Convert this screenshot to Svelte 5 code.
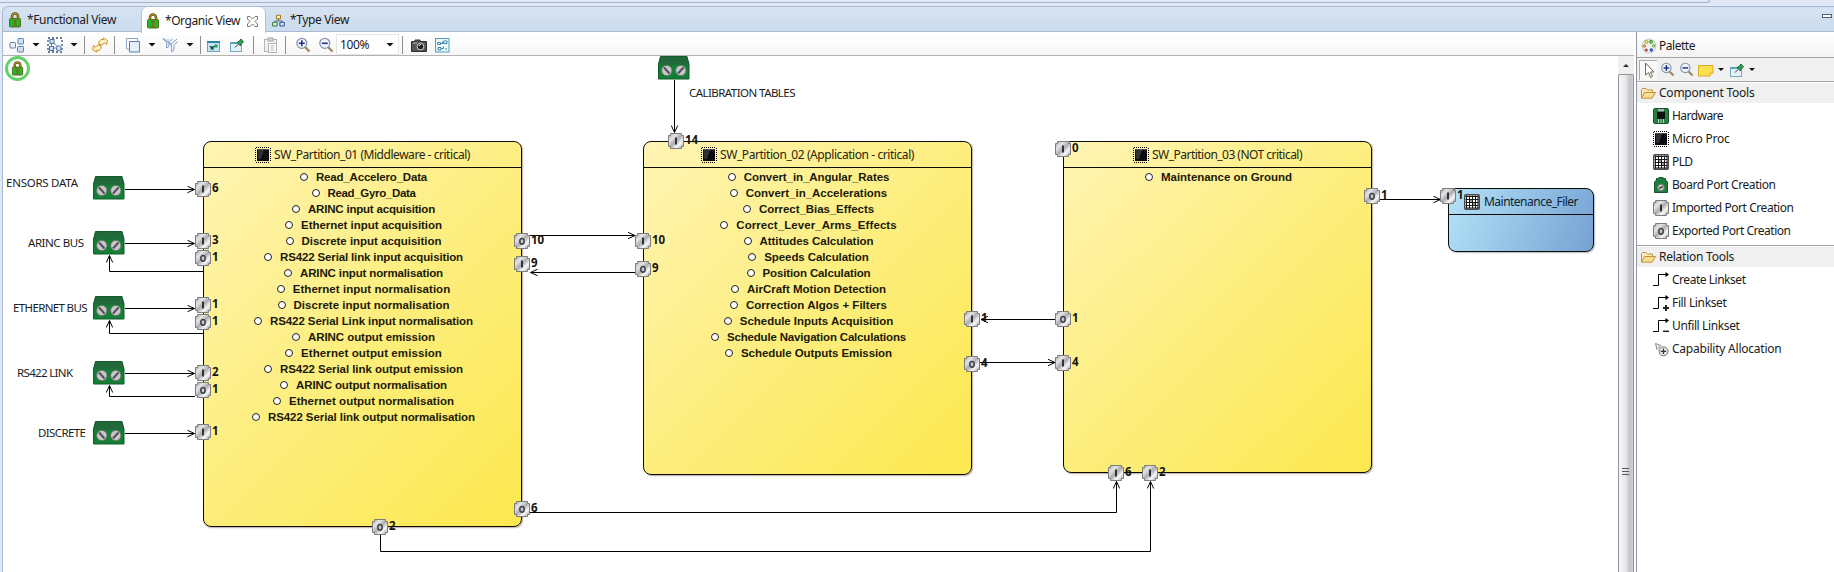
<script>
  // Spreads a label's letters so that it takes exactly the given width.
  function fit(node, width) {
    if (!width) return;
    const natural = node.getBoundingClientRect().width;
    node.style.letterSpacing = (width - natural) / node.textContent.length + 'px';
  }

  const toolbar = [
    { icon: 'boxes', gap: 6 }, { arrow: true, gap: 7 },
    { icon: 'select', gap: 7 }, { arrow: true, gap: 7 },
    { sep: true, gap: 6 }, { icon: 'sync', gap: 7 }, { sep: true, gap: 6 },
    { icon: 'layers', gap: 10 }, { arrow: true, gap: 7 },
    { icon: 'filter', gap: 6 }, { arrow: true, gap: 8 },
    { sep: true, gap: 6 }, { icon: 'pinwin', gap: 7 }, { icon: 'pin', gap: 8 },
    { sep: true, gap: 5 }, { icon: 'clip', gap: 9 }, { sep: true, gap: 6 },
    { icon: 'zoomin', gap: 9 }, { icon: 'zoomout', gap: 7 },
    { combo: true, gap: 2 }, { sep: true, gap: 3 },
    { icon: 'camera', gap: 8 }, { icon: 'outline', gap: 7 }
  ];

  const sections = [
    { title: 'Component Tools', w: 95.5, items: [
      ['hardware', 'Hardware', 51], ['chip', 'Micro Proc', 57.5], ['pld', 'PLD', 20.5],
      ['board', 'Board Port Creation', 103.5], ['portI', 'Imported Port Creation', 121.5],
      ['portO', 'Exported Port Creation', 118.5]
    ] },
    { title: 'Relation Tools', w: 75, items: [
      ['link', 'Create Linkset', 73.5], ['linkplus', 'Fill Linkset', 54.5],
      ['linkminus', 'Unfill Linkset', 67.5], ['capability', 'Capability Allocation', 109.5]
    ] }
  ];

  const nodes = [
    { x: 203, y: 141, w: 319, h: 386, title: 'SW_Partition_01 (Middleware - critical)', tw: 196, rows: [
      ['Read_Accelero_Data', 111], ['Read_Gyro_Data', 88], ['ARINC input acquisition', 127],
      ['Ethernet input acquisition', 141], ['Discrete input acquisition', 140],
      ['RS422 Serial link input acquisition', 183], ['ARINC input normalisation', 143],
      ['Ethernet input normalisation', 157.5], ['Discrete input normalisation', 156],
      ['RS422 Serial Link input normalisation', 203], ['ARINC output emission', 127],
      ['Ethernet output emission', 141], ['RS422 Serial link output emission', 183],
      ['ARINC output normalisation', 151], ['Ethernet output normalisation', 165],
      ['RS422 Serial link output normalisation', 207]
    ] },
    { x: 643, y: 141, w: 329, h: 334, title: 'SW_Partition_02 (Application - critical)', tw: 194, rows: [
      ['Convert_in_Angular_Rates', 145.5], ['Convert_in_Accelerations', 141.5], ['Correct_Bias_Effects', 115],
      ['Correct_Lever_Arms_Effects', 160.5], ['Attitudes Calculation', 114], ['Speeds Calculation', 104.5],
      ['Position Calculation', 108], ['AirCraft Motion Detection', 139],
      ['Correction Algos + Filters', 141], ['Schedule Inputs Acquisition', 153.5],
      ['Schedule Navigation Calculations', 179], ['Schedule Outputs Emission', 151]
    ] },
    { x: 1063, y: 141, w: 309, h: 332, title: 'SW_Partition_03 (NOT critical)', tw: 150, rows: [
      ['Maintenance on Ground', 131]
    ] },
    { x: 1448, y: 188, w: 146, h: 64, title: 'Maintenance_Filer', tw: 94, blue: true, rows: [] }
  ];

  // centre x, centre y, kind, number of grouped ports
  const ports = [
    [203, 189, 'I', 6], [203, 241, 'I', 3], [203, 258, 'O', 1], [203, 305, 'I', 1], [203, 322, 'O', 1],
    [203, 373, 'I', 2], [203, 390, 'O', 1], [203, 432, 'I', 1],
    [522, 241, 'O', 10], [522, 264, 'I', 9], [522, 509, 'O', 6], [380, 527, 'O', 2],
    [676, 141, 'I', 14], [643, 241, 'I', 10], [643, 269, 'O', 9], [972, 319, 'I', 1], [972, 364, 'O', 4],
    [1063, 149, 'I', 0], [1063, 319, 'O', 1], [1063, 363, 'I', 4], [1372, 196, 'O', 1],
    [1116, 473, 'I', 6], [1150, 473, 'I', 2], [1448, 196, 'I', 1]
  ];

  const boards = [[93, 176], [93, 231], [93, 296], [93, 361], [93, 421], [658, 56]];

  const labels = [
    ['ENSORS DATA', 6, 187, 72], ['ARINC BUS', 28, 247, 56], ['ETHERNET BUS', 13, 312, 74.5],
    ['RS422 LINK', 17, 377, 56], ['DISCRETE', 38, 437, 48], ['CALIBRATION TABLES', 689, 97, 106.5]
  ];

  const edges = [
    'M125 189.5H194.5', 'M125 243.5H194.5', 'M125 308.5H194.5', 'M125 373.5H194.5', 'M125 433.5H194.5',
    'M203 271.5H109.5V255.5', 'M203 333.5H109.5V320.5', 'M195 396.5H109.5V385.5',
    'M674.5 80V132.5', 'M530 235.5H635', 'M635 272.5H530.5',
    'M1055 319.5H981', 'M980 362.5H1055', 'M1380 199.5H1440.5',
    'M530 512.5H1116.5V481.5', 'M380.5 535V551.5H1150.5V481.5'
  ];
</script>

{#snippet icon(name, size = 16)}
  <svg class="icon" width={size} height={size} viewBox="0 0 16 16">
    {#if name === 'lock'}
      <path d="M5 7V4.500A3 3 0 0 1 11 4.500V7" fill="none" stroke="#5c4a08" stroke-width="2.600" />
      <path d="M5 7V4.500A3 3 0 0 1 11 4.500V7" fill="none" stroke="#c8a63a" stroke-width="1" />
      <rect x="2.500" y="6.500" width="11" height="8.500" rx="1" fill="#25b52b" stroke="#5c6b16" />
      <path d="M6 8.500h4M8 8.500v5M6 13.500h4M6.500 11h3" stroke="#a0521a" />
    {:else if name === 'tree'}
      <path d="M8 5v4M3.500 10V8.500h9V10" fill="none" stroke="#4d5f7d" />
      <rect x="5.500" y="1.500" width="5" height="4.500" rx="1" fill="#fdf3b0" stroke="#a87a1a" stroke-width="1.300" />
      <rect x=".8" y="10.200" width="5.500" height="4.500" rx="1" fill="#d9f0d0" stroke="#2f7a38" stroke-width="1.300" />
      <rect x="9.700" y="10.200" width="5.500" height="4.500" rx="1" fill="#d5e4fa" stroke="#2c4e98" stroke-width="1.300" />
    {:else if name === 'boxes'}
      <rect x="1" y="5.500" width="5.500" height="5.500" rx=".8" fill="#e9f1fa" stroke="#5f82ab" />
      <rect x="9" y="1.500" width="5.500" height="5.500" rx=".8" fill="#cfe0f3" stroke="#5f82ab" />
      <rect x="8.500" y="9.500" width="6" height="5.500" rx=".8" fill="#cfe0f3" stroke="#5f82ab" />
    {:else if name === 'select'}
      <rect x="1" y="1" width="14" height="14" fill="none" stroke="#39506e" stroke-dasharray="2 2" stroke-width="1.300" />
      <path d="M4.500 4v7M5 5l6 5M5 11h6" stroke="#6d8db0" fill="none" />
      <rect x="3" y="2.500" width="4" height="4" fill="#cfe0f3" stroke="#4d73a0" />
      <rect x="2.500" y="9.500" width="4" height="4" fill="#cfe0f3" stroke="#4d73a0" />
      <rect x="9.500" y="9" width="4.500" height="4.500" rx="1.500" fill="#cfe0f3" stroke="#4d73a0" />
    {:else if name === 'sync'}
      <path d="M7 7.500V4.500L9 2.500H11.500V.8L15.500 3.500L14.500 7.500L12.500 6L10 8z" fill="#fdf0c4" stroke="#d0901f" />
      <path d="M9 8.500V11.500L7 13.500H4.500V15.200L.5 12.500L1.500 8.500L3.500 10L6 8z" fill="#fdf0c4" stroke="#d0901f" />
    {:else if name === 'layers'}
      <path d="M1.500 1.500h11v10.500h-11z" fill="#fff" stroke="#8aa6c5" />
      <path d="M4.500 4.500h10v10.500h-10z" fill="#e6f0fa" stroke="#5c80aa" />
    {:else if name === 'filter'}
      <path d="M.5 1.500l4 3.500v6l2.500-1.500V5L10.500 2" fill="#dbe9f7" stroke="#83a6c9" />
      <path d="M6.500 4.500l3 3.500v7l2.500-2V8.500L15.500 4.500" fill="#eef5fc" stroke="#83a6c9" />
      <path d="M1 1.500l8 5.500M15 2L8 8" stroke="#7f9fc2" />
    {:else if name === 'pinwin'}
      <rect x="2.500" y="4.500" width="12" height="10" fill="#c9e4f4" stroke="#6fa2b9" />
      <path d="M2 5h13" stroke="#2d83a8" stroke-width="2" />
      <path d="M4 9l4.500 4.500V9.500z" fill="#14324e" /><path d="M5.500 12.500l5-4" stroke="#17733a" stroke-width="1.500" />
      <circle cx="11" cy="9" r="1.800" fill="#28a552" />
    {:else if name === 'pin'}
      <rect x="1.500" y="5.500" width="11" height="9" fill="#e2f1f8" stroke="#77aabf" />
      <path d="M2 6h7" stroke="#55a3c0" stroke-width="2" />
      <path d="M6 10.500l3-3" stroke="#333" />
      <path d="M8 5.500l3.500 3.500l1-2.500l2-1.500l-2.500-3l-1.500 2z" fill="#34a052" stroke="#1b6a34" />
    {:else if name === 'clip'}
      <rect x="1.500" y="2.500" width="12" height="12" fill="#f1f1f1" stroke="#b4b4b4" />
      <rect x="5" y="1" width="5" height="3" fill="#d8d8d8" stroke="#a8a8a8" />
      <path d="M5.500 6.500h8v9h-8z" fill="#fff" stroke="#b0b0b0" /><path d="M7.500 9h4M7.500 11h3M7.500 13h4" stroke="#b4b4b4" />
    {:else if name === 'zoomin' || name === 'zoomout'}
      <path d="M10 10l4.500 4.500" stroke="#9a8459" stroke-width="2.200" />
      <circle cx="6.800" cy="6.300" r="5" fill="#f0f4fb" stroke="#8593ad" stroke-width="1.200" />
      <path d={name === 'zoomin' ? 'M3.800 6.300h6M6.800 3.300v6' : 'M3.800 6.300h6'} stroke="#20338c" stroke-width="1.600" />
    {:else if name === 'camera'}
      <path d="M.5 4.500H4V3h5v1.500h6.500v10H.5z" fill="#565656" stroke="#2d2d2d" />
      <path d="M2 6h4" stroke="#b5b5b5" /><circle cx="9.500" cy="9.500" r="3.400" fill="#222" stroke="#d5d5d5" />
      <path d="M8 9a2 2 0 0 1 2-1.500" stroke="#eee" fill="none" />
    {:else if name === 'outline'}
      <rect x="1.500" y="1.500" width="13.500" height="13.500" fill="#eef9fc" stroke="#4f9dba" />
      <path d="M3.500 5.500h3v2h-3zM9.500 4h3.500v2.500H9.500zM4 10.500h3V13H4zM6.500 6.500h2v-1.500h1M7 11.500h2.500V9.500M11 12h2" fill="none" stroke="#3888aa" />
    {:else if name === 'palette'}
      <circle cx="8" cy="8" r="7" fill="#eef1f4" stroke="#b9cbe0" />
      <circle cx="5.500" cy="4" r="1.500" fill="#fff5a0" stroke="#b59a10" /><circle cx="10" cy="3.800" r="1.500" fill="#8fcf60" stroke="#3c9626" />
      <circle cx="3.300" cy="8" r="1.300" fill="#f6b36a" stroke="#d07428" /><circle cx="12.700" cy="7.800" r="1.300" fill="#c6e29a" stroke="#6aa52d" />
      <circle cx="5.200" cy="12" r="1.600" fill="#d53e36" /><circle cx="10.300" cy="12" r="1.700" fill="#2d4cc8" />
    {:else if name === 'cursor'}
      <path d="M4.500 1v12l3-2.500l2 5l2-1l-2-4.500h3.500z" fill="#fff" stroke="#6c674d" />
    {:else if name === 'note'}
      <path d="M.5 3.500h14.500V11l-3 3H.5z" fill="#fbe04f" stroke="#d9ad22" /><path d="M12 14V11h3" fill="#fff2a8" stroke="#d9ad22" />
    {:else if name === 'folder'}
      <path d="M1.500 13V4.500l1-1h3.500l1.500 1.500h5V7" fill="#fbeabb" stroke="#c0913d" />
      <path d="M1.500 13.200L4.500 7.500h11L12 13.200z" fill="#fbdc93" stroke="#c0913d" />
    {:else if name === 'hardware'}
      <rect x=".5" y=".5" width="15" height="15" rx="1.500" fill="#24813f" stroke="#14542a" />
      <rect x="4" y="3.500" width="8" height="7.500" fill="#0d0f0e" />
      <path d="M5 1h6v2.500H5z" fill="#a9b3ad" /><path d="M5.500 11v4M8 11v4M10.500 11v4" stroke="#c1cbc4" />
    {:else if name === 'chip'}
      <path d="M1 .5h14M1 15.500h14M.5 1v14M15.500 1v14" stroke="#000" stroke-dasharray="1 1" shape-rendering="crispEdges" />
      <rect x="2" y="2" width="12" height="12" fill="#0c0c0f" /><path d="M3 3h6L6 12H3z" fill="#303037" />
      <path d="M2 2.500h12" stroke="#4c4c52" />
    {:else if name === 'pld'}
      <rect x=".7" y=".7" width="14.600" height="14.600" rx="1.200" fill="#fff" stroke="#4a4a4a" stroke-width="1.400" />
      <path d="M2.500 1.500v13M5.500 1.500v13M8.500 1.500v13M11.500 1.500v13M14 1.500v13M1.500 2.500h13M1.500 5.500h13M1.500 8.500h13M1.500 11.500h13M1.500 14h13" stroke="#191919" />
      <path d="M6 6h2v2H6zM9 9h2v2H9z" fill="#999" />
    {:else if name === 'board'}
      <path d="M1.500 15.500V5l2-2V1.500h2L6 .5h4l.5 1h2V3l2 2v10.500z" fill="#1f7d3c" stroke="#145629" />
      <circle cx="8" cy="10.500" r="3.300" fill="#c8ccc8" stroke="#707a73" /><path d="M6 11.500l4-2" stroke="#4c5652" stroke-width="1.500" />
    {:else if name === 'portI' || name === 'portO'}
      <path d="M2.500.5h11v2h2v11h-2v2h-11v-2h-2v-11h2z" fill="url(#metal)" stroke="#7d7d7d" />
      {#if name === 'portI'}
        <path d="M8 4.500v7" stroke="#30343a" stroke-width="2" />
      {:else}
        <ellipse cx="8" cy="8.300" rx="2.200" ry="2.900" fill="#c5c9cc" stroke="#3d4248" stroke-width="1.500" />
      {/if}
    {:else if name.startsWith('link')}
      <path d="M0 13.500h5.500V2.500h8" fill="none" stroke="#000" /><path d="M12.500 0L16 2.500L12.500 5.200z" fill="#000" />
      {#if name === 'linkplus'}<path d="M10 13h6M13 10v6" stroke="#222" stroke-width="2" />{/if}
      {#if name === 'linkminus'}<path d="M10 13.300h6" stroke="#222" stroke-width="1.500" />{/if}
    {:else if name === 'capability'}
      <path d="M2.500 2.500l5.500 2L4 8.500z" fill="#e9e9e9" stroke="#8d8d8d" />
      <circle cx="10.500" cy="10.300" r="4.500" fill="#e4e4e4" stroke="#777" /><path d="M7.800 10.300h5.400M10.500 7.600v5.400" stroke="#333" stroke-width="1.200" />
    {/if}
  </svg>
{/snippet}

<div class="workbench">
  <div class="topband"></div>
  <div class="tabs">
    <div class="tab first">{@render icon('lock')}<span><i use:fit={89}>*Functional View</i></span></div>
    <div class="tab active">{@render icon('lock')}<span><i use:fit={75}>*Organic View</i></span>
      <svg class="close" width="11" height="11" viewBox="0 0 11 11"><path d="M.5.5h2.500l2.500 2.500L8 .5h2.500V3L8 5.500L10.500 8v2.500H8L5.500 8L3 10.500H.5V8L3 5.500L.5 3z" fill="#fff" stroke="#757575" /></svg>
    </div>
    <div class="tab">{@render icon('tree', 13)}<span><i use:fit={59}>*Type View</i></span></div>
    <div class="minimize"></div>
  </div>

  <div class="main">
    <div class="editor">
      <div class="toolbar">
        {#each toolbar as t}
          <div class="tool" class:windowed={t.icon === 'pinwin' || t.icon === 'pin'} style="margin-left: {t.gap}px">
            {#if t.sep}<div class="sep"></div>
            {:else if t.arrow}<div class="arrow"></div>
            {:else if t.combo}<div class="combo"><i use:fit={29}>100%</i><div class="arrow"></div></div>
            {:else}{@render icon(t.icon)}{/if}
          </div>
        {/each}
      </div>
      <div class="view">
        <div class="canvas">
          <div class="world">
            <div class="lockbadge">{@render icon('lock', 15)}</div>
            {#each nodes as n}
              <div class="node" class:blue={n.blue} style="left: {n.x}px; top: {n.y}px; width: {n.w}px; height: {n.h}px">
                <div class="head">{@render icon(n.blue ? 'pld' : 'chip')}<i use:fit={n.tw}>{n.title}</i></div>
                <div class="rows">
                  {#each n.rows as [text, w]}
                    <div class="row"><div class="dot"></div><b use:fit={w}>{text}</b></div>
                  {/each}
                </div>
              </div>
            {/each}
            <svg class="wires" width="1618" height="572" viewBox="0 0 1618 572">
              <defs>
                <linearGradient id="metal" x1="0" y1="0" x2="1" y2="1">
                  <stop offset="0" stop-color="#9c9c9e" /><stop offset=".28" stop-color="#e6e6e6" />
                  <stop offset=".5" stop-color="#adadb2" /><stop offset=".72" stop-color="#f8f8f8" />
                  <stop offset="1" stop-color="#8f8f92" />
                </linearGradient>
                <marker id="tip" markerWidth="10" markerHeight="8" refX="7.500" refY="4" orient="auto" markerUnits="userSpaceOnUse">
                  <path d="M.5.8L7.500 4L.5 7.200" fill="none" stroke="#000" />
                </marker>
              </defs>
              {#each edges as d}
                <path {d} fill="none" stroke="#000" marker-end="url(#tip)" />
              {/each}
              {#each boards as [x, y]}
                <g transform="translate({x} {y})">
                  <path d="M2.500 .5h26.500L31 8v15H.5V8z" fill="#128034" />
                  <path d="M2.500 .5h26.500L31 8.500H.5z" fill="#21683a" />
                  <path d="M2.500 .5h26.500L31 8v15H.5V8z" fill="none" stroke="#155a2c" />
                  {#each [8.800, 22.800] as cx, i}
                    <circle {cx} cy="14.500" r="5.200" fill="#c9c6c4" stroke="#666e68" />
                    <path d={i ? 'M20 17.500l5.500-6' : 'M6 11.500l5.500 6'} stroke="#4b5263" stroke-width="2" />
                  {/each}
                </g>
              {/each}
              {#each labels as [text, x, y, w]}
                <text {x} {y} textLength={w} class="label">{text}</text>
              {/each}
            </svg>
            {#each ports as [x, y, kind, count]}
              <div class="port" style="left: {x - 8}px; top: {y - 8}px">{@render icon('port' + kind)}<span>{count}</span></div>
            {/each}
          </div>
        </div>
        <div class="scroll">
          <div class="up"></div>
          <div class="thumb"><div class="grip"></div></div>
        </div>
      </div>
    </div>

    <div class="palette">
      <div class="phead">{@render icon('palette')}<i use:fit={36}>Palette</i></div>
      <div class="ptools">
        <div class="pick">{@render icon('cursor')}</div>
        {@render icon('zoomin', 15)}{@render icon('zoomout', 15)}{@render icon('note')}
        <div class="arrow small"></div>{@render icon('pin')}<div class="arrow small"></div>
      </div>
      {#each sections as s}
        <div class="section">
          <div class="stitle">{@render icon('folder')}<i use:fit={s.w}>{s.title}</i></div>
          {#each s.items as [name, text, w]}
            <div class="pitem">{@render icon(name)}<i use:fit={w}>{text}</i></div>
          {/each}
        </div>
      {/each}
    </div>
  </div>
</div>

<style>
  :global(body) { margin: 0; overflow: hidden; }
  .workbench {
    width: 1834px; height: 572px; overflow: hidden; display: flex; flex-direction: column;
    background: #e1e8f5; color: #1b1b1b; font: 12px/16px "Noto Sans", "Open Sans", sans-serif;
  }
  .workbench * { box-sizing: border-box; }
  i { font-style: normal; white-space: nowrap; display: inline-block; }
  .icon { display: block; flex: none; overflow: visible; }
  .topband { height: 3px; width: 1710px; flex: none; border-bottom: 1px solid #a5b1c8; border-right: 1px solid #a5b1c8; border-radius: 0 0 3px 0; }
  .tabs {
    height: 26px; flex: none; margin: 3px 0 0 2px; display: flex; position: relative;
    border: 1px solid #a9b9d0; border-right: 0; border-radius: 6px 0 0 0;
    background: linear-gradient(#d6e2f1, #cbdcee);
  }
  .tab { display: flex; align-items: center; padding: 2px 0 0 6px; }
  .tab span { margin-left: 5px; }
  .tab.first { width: 138px; padding-left: 4px; }
  .tab.first span, .tab.active span { margin-left: 4px; }
  .tab.active { width: 125px; height: 26px; padding-left: 3px; background: #fff; border: 1px solid #b3c1d5; border-width: 0 1px; border-radius: 6px 6px 0 0; }
  .close { margin-left: 7px; }
  .minimize { position: absolute; right: 2px; top: 7px; width: 10px; height: 4px; border: 1px solid #555c66; background: #fff; }
  .main { flex: 1; min-height: 0; display: flex; margin-left: 2px; border-left: 1px solid #a9b9d0; background: #fff; }
  .editor { width: 1631px; flex: none; display: flex; flex-direction: column; }
  .toolbar { height: 24px; flex: none; display: flex; align-items: center; padding-top: 2px; background: linear-gradient(#fff, #f7f7f7); border-bottom: 1px solid #b2b2b2; }
  .tool { flex: none; }
  .tool.windowed { transform: translateX(-3px); }
  .sep { width: 1px; height: 18px; background: #8e8e8e; }
  .arrow { width: 8px; height: 4px; background: #111; clip-path: polygon(0 0, 100% 0, 50% 100%); flex: none; }
  .arrow.small { width: 6px; height: 3px; }
  .combo { width: 63px; height: 21px; background: #fff; border: 1px solid #e6e6e6; display: flex; align-items: center; justify-content: space-between; padding: 0 4px 0 3px; }
  .view { flex: 1; min-height: 0; display: flex; }
  .canvas { position: relative; flex: 1; overflow: hidden; background: #fff; }
  .world { position: absolute; left: -3px; top: -56px; width: 1620px; height: 628px; }
  .lockbadge { position: absolute; left: 5px; top: 56px; width: 25px; height: 25px; border: 3px solid #62d267; border-radius: 50%; display: grid; place-items: center; }
  .node {
    position: absolute; border: 1px solid #0c0c05; border-radius: 8px; color: #28260a;
    background: linear-gradient(135deg, #fff4b4 0%, #fdee7e 50%, #fce84e 100%);
    box-shadow: 1px 1px 1.5px #b9aaa6;
  }
  .node.blue { background: linear-gradient(110deg, #b4e2f8, #75a2d2); box-shadow: 1px 1px 1.5px #b5b9c2; color: #10202c; }
  .head { height: 26px; border-bottom: 1px solid #0c0c05; display: flex; align-items: center; justify-content: center; gap: 3px; }
  .blue .head { gap: 4px; }
  .rows { padding: 1px 0 0 2px; }
  .row { height: 16px; display: flex; align-items: center; justify-content: center; gap: 8px; }
  .row b { font: bold 11.500px/16px "Liberation Sans", sans-serif; white-space: nowrap; color: #1c1a08; }
  .dot { width: 8px; height: 8px; border: 1.2px solid #222; border-radius: 50%; background: #fff; }
  .wires { position: absolute; left: 0; top: 0; }
  .label { font-size: 11.500px; fill: #1c1c1c; }
  .port { position: absolute; display: flex; }
  .port span { font-size: 11.500px; font-weight: 700; line-height: 14px; margin-left: 1px; color: #14130a; }
  .scroll { width: 16px; flex: none; display: flex; flex-direction: column; background: #f0f0f0; }
  .up { width: 6px; height: 3px; margin: 8px 5px 7px; background: #333; clip-path: polygon(50% 0, 100% 100%, 0 100%); }
  .thumb { flex: 1; border: 1px solid #949498; border-bottom: 0; border-radius: 2px 2px 0 0; background: linear-gradient(90deg, #f6f6f6, #e9e9eb 45%, #c2c2c8 80%, #d3d3d8); padding-top: 393px; }
  .grip { width: 7px; height: 8px; margin-left: 3px; background: repeating-linear-gradient(#55585c 0 1px, transparent 1px 3px); }
  .palette { flex: 1; margin-left: 2px; border-left: 1px solid #8d95a0; background: #fff; }
  .phead { height: 26px; display: flex; align-items: center; gap: 2px; padding: 3px 0 0 4px; border-bottom: 1px solid #a4a4a4; background: linear-gradient(#fff, #f3f3f3); }
  .ptools { height: 24px; display: flex; align-items: center; background: #f0f0f0; border-bottom: 1px solid #a4a4a4; gap: 4px; }
  .pick { width: 18px; height: 20px; margin: 0 -1px 0 2px; border: 1px solid #aaa; border-width: 1px 0 0 1px; background: #f8f8f8; display: grid; place-items: center; }
  .ptools .arrow + .icon { margin-left: 1px; }
  .section { border-bottom: 1px solid #a4a4a4; padding-top: 1px; height: 164px; }
  .section:last-child { border: 0; }
  .stitle { height: 20px; display: flex; align-items: center; gap: 3px; padding-left: 3px; background: #f0f0f0; margin-bottom: 1px; }
  .pitem { height: 23px; display: flex; align-items: center; gap: 3px; padding-left: 16px; }
</style>
